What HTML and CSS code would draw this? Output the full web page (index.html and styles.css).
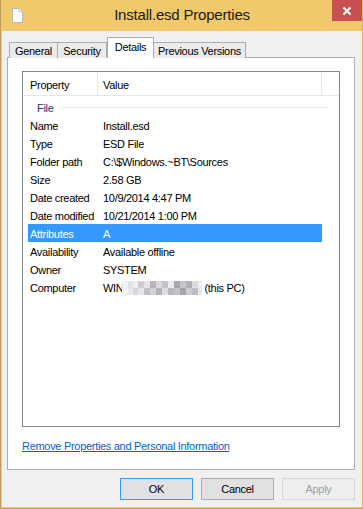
FILE: index.html
```html
<!DOCTYPE html>
<html lang="en">
<head>
    <meta charset="UTF-8">
    <title>Install.esd Properties</title>
    <link rel="stylesheet" href="styles.css">
</head>
<body>
    <div class="window">
        <div class="titlebar">
            <svg class="app-icon" width="11" height="15" viewBox="0 0 11 15">
                <path d="M0.5 0.5 H7 L10.5 4 V14.5 H0.5 Z" fill="#fff" stroke="#b8b8b8"/>
                <path d="M7 0.5 V4 H10.5" fill="#f2f2f2" stroke="#c8c8c8"/>
            </svg>
            <div class="title">Install.esd Properties</div>
            <div class="close">
                <svg width="10" height="10" viewBox="0 0 10 10">
                    <path d="M1.5 1.5 L8.5 8.5 M8.5 1.5 L1.5 8.5" stroke="#fff" stroke-width="2"/>
                </svg>
            </div>
        </div>

        <div class="client">
            <div class="tabs">
                <div class="tab tab-general">General</div>
                <div class="tab tab-security">Security</div>
                <div class="tab tab-details active">Details</div>
                <div class="tab tab-previous">Previous Versions</div>
            </div>

            <div class="panel">
                <div class="listview">
                    <div class="lv-header">
                        <div class="lv-col col-prop">Property</div>
                        <div class="lv-col col-val">Value</div>
                    </div>
                    <div class="group"><span>File</span><div class="group-line"></div></div>
                    <div class="row"><span>Name</span><span>Install.esd</span></div>
                    <div class="row"><span>Type</span><span>ESD File</span></div>
                    <div class="row"><span>Folder path</span><span>C:\$Windows.~BT\Sources</span></div>
                    <div class="row"><span>Size</span><span>2.58 GB</span></div>
                    <div class="row"><span>Date created</span><span>10/9/2014 4:47 PM</span></div>
                    <div class="row"><span>Date modified</span><span>10/21/2014 1:00 PM</span></div>
                    <div class="row selected"><span>Attributes</span><span>A</span></div>
                    <div class="row"><span>Availability</span><span>Available offline</span></div>
                    <div class="row"><span>Owner</span><span>SYSTEM</span></div>
                    <div class="row"><span>Computer</span><span>WIN<span class="mosaic"></span>(this PC)</span></div>
                </div>
                <a class="link" href="#">Remove Properties and Personal Information</a>
            </div>

            <div class="buttons">
                <button class="btn default">OK</button>
                <button class="btn">Cancel</button>
                <button class="btn" disabled>Apply</button>
            </div>
        </div>
    </div>
</body>
</html>
```

FILE: styles.css
```css
html, body { margin: 0; padding: 0; }
body { font-family: "Liberation Sans", Arial, sans-serif; font-size: 11px; letter-spacing: -0.3px; color: #000; background: #f0c96c; }

.window { width: 363px; height: 509px; box-sizing: border-box; background: #f0c96c; border-left: 1px solid #bf9d5f; border-right: 1px solid #d9b465; border-bottom: 1px solid #bf9d5f; padding: 0 0 1px 1px; display: flex; flex-direction: column; }

.titlebar { height: 31px; flex: none; display: grid; grid-template-columns: 1fr auto 1fr; align-items: start; }
.app-icon { margin: 8px 0 0 10px; display: block; }
.title { font-size: 15px; letter-spacing: -0.2px; color: #1a1a1a; line-height: 30px; }
.close { justify-self: end; width: 30px; height: 21px; background: #c75050; display: flex; align-items: center; justify-content: center; }
.close svg { display: block; }

.client { flex: 1; background: #f0f0f0; padding: 7px 7px 0 5px; display: flex; flex-direction: column; }

/* tab strip: widths follow the original dialog */
.tabs { display: flex; align-items: flex-end; padding-left: 2px; height: 20px; margin-bottom: -1px; position: relative; z-index: 1; }
.tab { height: 16px; box-sizing: border-box; border: 1px solid #acacac; border-bottom: none; background: #ebebeb; padding-top: 1px; line-height: 15px; text-align: center; }
.tab-general { width: 49px; }
.tab-security { width: 50px; margin-left: -1px; }
.tab-details { width: 47px; }
.tab-previous { width: 93px; margin-left: -1px; }
.tab.active { height: 21px; background: #fff; padding-top: 0; line-height: 19px; position: relative; z-index: 2; }

.panel { height: 413px; box-sizing: border-box; background: #fff; border: 1px solid #adadad; padding: 13px 0 0 14px; }

.listview { width: 318px; height: 356px; box-sizing: border-box; border: 1px solid #828790; }
.lv-header { display: flex; height: 24px; box-sizing: border-box; border-bottom: 1px solid #e5e8ef; }
.lv-col { border-right: 1px solid #e3e8f2; line-height: 23px; padding-top: 2px; box-sizing: border-box; }
.col-prop { width: 75px; padding-left: 7px; }
.col-val { width: 224px; padding-left: 5px; }

.group { height: 20px; box-sizing: border-box; display: flex; align-items: center; padding: 3px 11px 0 14px; color: #1e3287; }
.group-line { flex: 1; height: 1px; background: #e2e7f1; margin-left: 7px; }

.row { display: grid; grid-template-columns: 73px 1fr; height: 18px; box-sizing: border-box; padding-top: 1px; line-height: 19px; margin: 0 17px 0 5px; white-space: nowrap; }
.row > span { padding-left: 2px; }
.row.selected { background: #3399ff; color: #fff; }

.mosaic { display: inline-block; width: 80px; height: 14px; vertical-align: -3px; margin: 0 2px 0 -1px;
    background:
        linear-gradient(90deg, #f1f0f3 0 6px, #e2e0e6 6px 11px, #efeef1 11px 16px, #cfcbd4 16px 22px, #e6e4e9 22px 28px, #b9b4bf 28px 34px, #d9d6de 34px 40px, #c6c2ca 40px 46px, #ebeaee 46px 52px, #aaa5ae 52px 58px, #c9c5cd 58px 64px, #b3afb6 64px 70px, #dddbe0 70px 76px, #eeeeef 76px 80px) top / 100% 7px no-repeat,
        linear-gradient(90deg, #f4f3f5 0 6px, #ebe9ee 6px 11px, #d9d6dd 11px 16px, #e8e6ea 16px 22px, #c3bfc8 22px 28px, #d4d0d8 28px 34px, #b7b2bc 34px 40px, #e0dee3 40px 46px, #bcb8c0 46px 52px, #c6c2c9 52px 58px, #a7a3ab 58px 64px, #cdcad0 64px 70px, #bfbcc2 70px 76px, #e9e8ea 76px 80px) bottom / 100% 7px no-repeat; }

.link { display: inline-block; margin-top: 13px; color: #0066cc; text-decoration: underline; }

.buttons { display: flex; justify-content: flex-end; gap: 8px; margin-top: 8px; }
.btn { width: 73px; height: 22px; box-sizing: border-box; border: 1px solid #adadad; background: #e1e1e1; font-family: "Liberation Sans", Arial, sans-serif; font-size: 11px; letter-spacing: -0.3px; color: #000; padding: 0; }
.btn.default { border-color: #3399ff; }
.btn:disabled { background: #efefef; border-color: #d5d5d5; color: #a0a0a0; }
```
